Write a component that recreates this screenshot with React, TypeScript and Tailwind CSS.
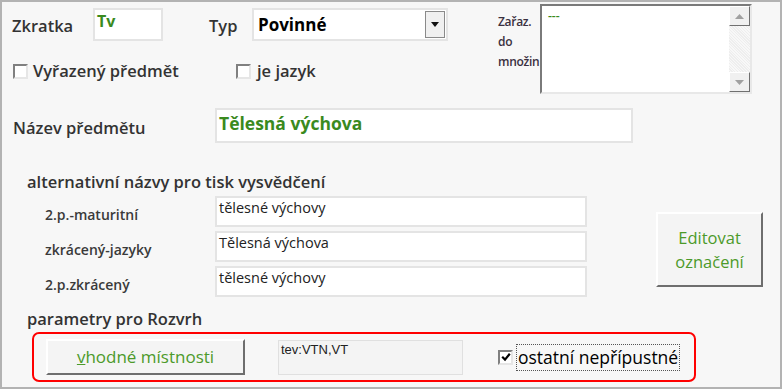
import React from "react";

const font = { fontFamily: '"Open Sans", "Noto Sans", sans-serif' };

function Box({ checked }: { checked?: boolean }) {
    return (
        <div className="w-[15px] h-[15px] bg-white border-2 border-t-[#808080] border-l-[#808080] border-b-[#e6e6e6] border-r-[#e6e6e6] flex items-center justify-center shrink-0">
            {checked && (
                <svg width="10" height="10" viewBox="0 0 10 10">
                    <path d="M1.2 4.8 L4 7.6 L8.8 1.8" stroke="#000" strokeWidth="2.2" fill="none" />
                </svg>
            )}
        </div>
    );
}

function Raised({ className, children }: { className: string; children: React.ReactNode }) {
    return (
        <div className={`bg-[#f4f4f4] border-2 border-t-white border-l-white border-b-[#6e6e6e] border-r-[#6e6e6e] flex items-center justify-center text-[#4c9a2a] ${className}`}>
            {children}
        </div>
    );
}

function ScrollBtn({ up }: { up?: boolean }) {
    return (
        <div className="h-[20px] bg-[#f0f0f0] border border-t-white border-l-white border-b-[#707070] border-r-[#707070] flex items-center justify-center">
            <svg width="9" height="5" viewBox="0 0 9 5">
                <path d={up ? "M0 5 H9 L4.5 0 Z" : "M0 0 H9 L4.5 5 Z"} fill="#a0a0a0" />
            </svg>
        </div>
    );
}

function AltRow({ label, value }: { label: string; value: string }) {
    return (
        <div className="flex items-center h-[31px]">
            <div className="w-[203px] pl-[33px] pt-[6px] text-[14px] font-semibold text-[#3a3a3a]">{label}</div>
            <div className="w-[372px] h-full bg-white border-2 border-[#e4e4e4] px-[2px] text-[14.5px] leading-[19px] text-[#222]">
                {value}
            </div>
        </div>
    );
}

export default function App() {
    return (
        <div className="w-[783px] h-[390px] bg-white" style={font}>
            <div className="w-[782px] h-[389px] border-2 border-[#b3b3b3] bg-[#f7f7f7] pl-[10px] text-[#333]">
                {/* top */}
                <div className="flex">
                    <div className="w-[486px] pt-[6px]">
                        <div className="flex items-center h-[33px]">
                            <div className="w-[81px] text-[16.5px] font-semibold pt-[4px]">Zkratka</div>
                            <div className="w-[70px] h-[33px] bg-white border-2 border-[#e4e4e4] pl-[2px] text-[16px] font-bold text-[#3a8a1e] leading-[22px]">
                                Tv
                            </div>
                            <div className="ml-[46px] w-[43px] text-[16.5px] font-semibold pt-[4px]">Typ</div>
                            <div className="w-[196px] h-[33px] bg-white border-2 border-[#e4e4e4] flex items-center pl-[4px] pr-[1px]">
                                <span className="flex-1 text-[17px] font-bold text-black">Povinné</span>
                                <div className="w-[20px] h-[27px] bg-[#f0f0f0] border border-[#8a8a8a] flex items-center justify-center">
                                    <svg width="8" height="5" viewBox="0 0 8 5">
                                        <path d="M0 0 H8 L4 5 Z" fill="#111" />
                                    </svg>
                                </div>
                            </div>
                        </div>
                        <div className="flex items-center mt-[22px] h-[16px]">
                            <div className="w-[224px] flex items-center">
                                <div className="ml-[1px]"><Box /></div>
                                <span className="ml-[5px] text-[16.5px] font-semibold">Vyřazený předmět</span>
                            </div>
                            <Box />
                            <span className="ml-[6px] text-[16.5px] font-semibold">je jazyk</span>
                        </div>
                    </div>
                    <div className="w-[42px] pt-[10px] text-[12px] font-semibold leading-[20px] tracking-[-0.3px] text-[#3a3040] whitespace-nowrap">
                        Zařaz.<br />do<br />množin
                    </div>
                    <div className="mt-[2px] w-[212px] h-[90px] bg-white border-2 border-t-[#7a7a7a] border-l-[#7a7a7a] border-b-[#e8e8e8] border-r-[#e8e8e8] flex">
                        <div className="flex-1 pl-[6px] text-[12px] leading-[20px] text-[#3a8a1e] font-semibold">---</div>
                        <div className="w-[21px] flex flex-col bg-[repeating-linear-gradient(45deg,#eeeeee_0px,#eeeeee_1px,#f8f8f8_1px,#f8f8f8_2px)]">
                            <ScrollBtn up />
                            <div className="flex-1" />
                            <ScrollBtn />
                        </div>
                    </div>
                </div>

                {/* name */}
                <div className="flex items-center mt-[14px] h-[35px]">
                    <div className="w-[203px] pl-[1px] pt-[6px] text-[16.5px] font-semibold">Název předmětu</div>
                    <div className="w-[418px] h-full bg-white border-2 border-[#e4e4e4] pl-[2px] text-[17.5px] font-bold text-[#3a8a1e] leading-[26px]">
                        Tělesná výchova
                    </div>
                </div>

                <div className="mt-[28px] pl-[15px] text-[16.5px] font-semibold leading-[22px]">alternativní názvy pro tisk vysvědčení</div>

                <div className="flex mt-[3px]">
                    <div className="flex flex-col gap-[4px]">
                        <AltRow label="2.p.-maturitní" value="tělesné výchovy" />
                        <AltRow label="zkrácený-jazyky" value="Tělesná výchova" />
                        <AltRow label="2.p.zkrácený" value="tělesné výchovy" />
                    </div>
                    <Raised className="ml-[69px] mt-[16px] w-[107px] h-[75px] text-[16.5px] leading-[24px] text-center">
                        Editovat<br />označení
                    </Raised>
                </div>

                <div className="mt-[11px] pl-[15px] text-[16.5px] font-semibold leading-[22px]">parametry pro Rozvrh</div>

                <div className="ml-[20px] mt-[2px] w-[664px] h-[50px] border-2 border-[#ff0000] rounded-[7px] flex items-center pl-[12px]">
                    <Raised className="w-[199px] h-[36px] text-[17px]">
                        <span><span className="underline">v</span>hodné místnosti</span>
                    </Raised>
                    <div className="ml-[33px] w-[185px] h-[35px] bg-[#f4f4f4] border border-[#e0e0e0] px-[2px] text-[13px] leading-[18px] text-[#222]" style={{ fontFamily: '"Liberation Sans", Arial, sans-serif' }}>
                        tev:VTN,VT
                    </div>
                    <div className="ml-[35px]"><Box checked /></div>
                    <div className="ml-[3px] h-[27px] px-[1px] border border-dotted border-[#555] flex items-center text-[17.5px] text-black">
                        ostatní nepřípustné
                    </div>
                </div>
            </div>
        </div>
    );
}
